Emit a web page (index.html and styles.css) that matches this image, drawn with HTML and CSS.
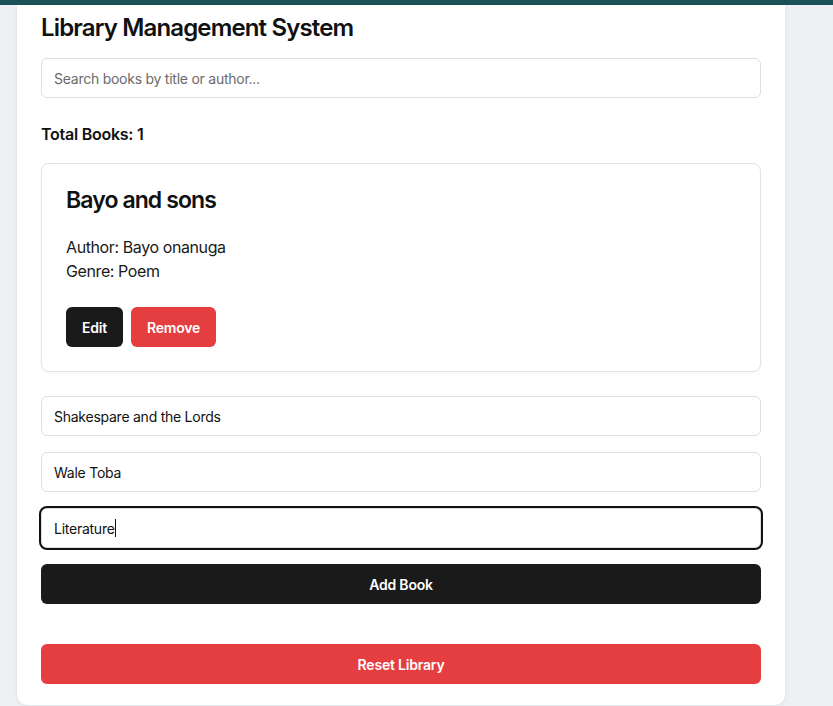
FILE: index.html
```html
<!DOCTYPE html>
<html lang="en">
<head>
<meta charset="utf-8">
<title>Library Management System</title>
<link rel="stylesheet" href="styles.css">
</head>
<body>
<div class="topbar"></div>
<main class="page">
  <section class="panel">
    <h1 class="title">Library Management System</h1>
    <input class="field" type="text" placeholder="Search books by title or author...">
    <p class="total">Total Books: 1</p>
    <article class="book">
      <h2 class="book-title">Bayo and sons</h2>
      <p class="book-meta">Author: Bayo onanuga</p>
      <p class="book-meta">Genre: Poem</p>
      <div class="book-actions">
        <button class="btn btn-dark btn-small">Edit</button>
        <button class="btn btn-red btn-small">Remove</button>
      </div>
    </article>
    <form class="add-form">
      <input class="field" type="text" value="Shakespare and the Lords">
      <input class="field" type="text" value="Wale Toba">
      <div class="focus-wrap">
        <input class="field field-focus" type="text" value="Literature"><span class="caret"></span>
      </div>
      <button type="button" class="btn btn-dark btn-wide">Add Book</button>
    </form>
    <button class="btn btn-red btn-wide reset">Reset Library</button>
  </section>
</main>
</body>
</html>
```

FILE: styles.css
```css
* { box-sizing: border-box; }
html, body { margin: 0; padding: 0; }
body {
  background: #eff0f4;
  font-family: Inter, "Noto Sans", "Liberation Sans", sans-serif;
  color: #111;
  height: 706px;
  overflow: hidden;
}
.topbar {
  height: 5px;
  background: #1c5157;
}
.page {
  padding-left: 17px;
}
.panel {
  width: 768px;
  background: #fff;
  border-radius: 0 0 10px 10px;
  box-shadow: 0 1px 4px rgba(0, 0, 0, 0.08);
  padding: 8px 24px 21px;
  display: flex;
  flex-direction: column;
}
.title {
  margin: 0 0 16px;
  font-size: 24px;
  line-height: 29px;
  font-weight: 600;
  letter-spacing: -0.85px;
}
.field {
  display: block;
  width: 100%;
  height: 40px;
  border: 1px solid #dedede;
  border-radius: 6px;
  padding: 0 12px;
  font-family: inherit;
  font-size: 14px;
  letter-spacing: -0.25px;
  color: #111;
  background: #fff;
  outline: none;
}
.field::placeholder { color: #6b6b6b; }
.total {
  margin: 24px 0 17px;
  font-size: 16px;
  line-height: 24px;
  font-weight: 600;
  letter-spacing: -0.25px;
}
.book {
  border: 1px solid #e2e2e2;
  border-radius: 8px;
  padding: 24px;
  box-shadow: 0 1px 3px rgba(0, 0, 0, 0.04);
}
.book-title {
  margin: 0 0 23px;
  font-size: 23px;
  line-height: 24px;
  font-weight: 600;
  letter-spacing: -0.9px;
}
.book-meta {
  margin: 0;
  font-size: 16px;
  line-height: 24px;
  letter-spacing: -0.4px;
  color: #1a1a1a;
}
.book-actions {
  margin-top: 24px;
  display: flex;
  gap: 8px;
}
.btn {
  border: none;
  border-radius: 6px;
  font-family: inherit;
  font-size: 14px;
  font-weight: 600;
  letter-spacing: -0.2px;
  color: #fff;
  height: 40px;
  cursor: pointer;
}
.btn-dark { background: #1a1a1a; }
.btn-red { background: #e53e41; }
.btn-small { padding: 0 16px; }
.btn-wide { width: 100%; }
.add-form {
  margin-top: 24px;
  display: flex;
  flex-direction: column;
  gap: 16px;
}
.focus-wrap {
  position: relative;
}
.field-focus {
  outline: 2px solid #111;
  outline-offset: 0;
}
.caret {
  position: absolute;
  left: 74px;
  top: 11px;
  width: 1px;
  height: 18px;
  background: #111;
}
.reset {
  margin-top: 40px;
}
```
